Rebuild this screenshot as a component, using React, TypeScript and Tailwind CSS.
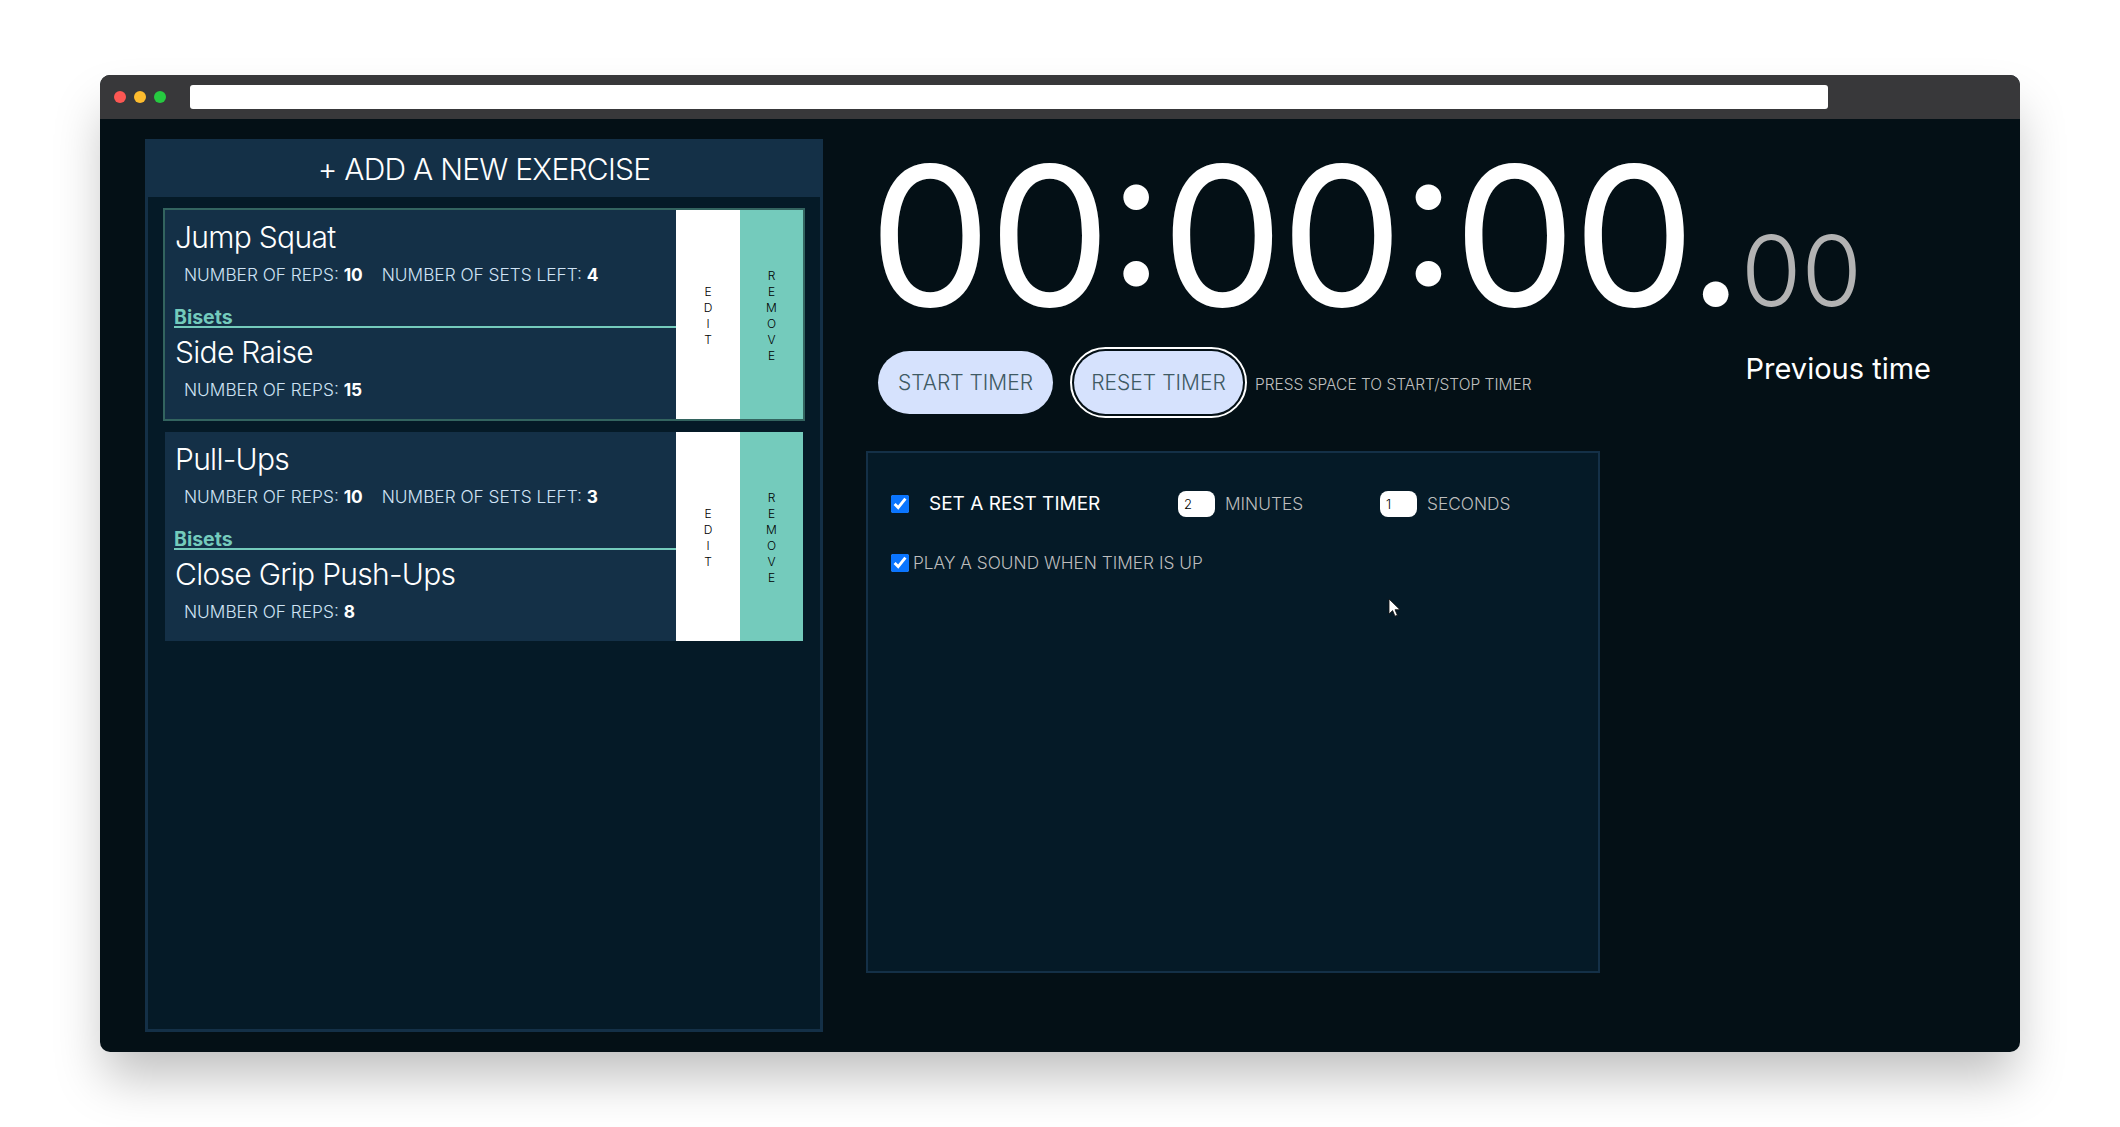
import { FC } from 'react';

type Exercise = { name: string; reps: number; sets?: number };

const groups: Exercise[][] = [
    [{ name: 'Jump Squat', reps: 10, sets: 4 }, { name: 'Side Raise', reps: 15 }],
    [{ name: 'Pull-Ups', reps: 10, sets: 3 }, { name: 'Close Grip Push-Ups', reps: 8 }],
];

const VerticalLabel: FC<{ text: string; className: string }> = ({ text, className }) => (
    <div className={`flex flex-col items-center justify-center text-[12px] leading-[16px] font-light text-black pt-[2px] ${className}`}>
        {text.split('').map((c, i) => <span key={i}>{c}</span>)}
    </div>
);

const Item: FC<{ ex: Exercise }> = ({ ex }) => (
    <div>
        <div className="text-[30px] leading-[36px] font-light tracking-[-0.7px] text-white pl-[1px]">{ex.name}</div>
        <div className="flex gap-[19px] pl-[10px] mt-[8px] text-[17.3px] leading-[24px] font-light text-[#cfe3f5]">
            <span>NUMBER OF REPS: <b className="font-bold text-white">{ex.reps}</b></span>
            {ex.sets !== undefined && <span>NUMBER OF SETS LEFT: <b className="font-bold text-white">{ex.sets}</b></span>}
        </div>
    </div>
);

const Card: FC<{ group: Exercise[]; selected?: boolean }> = ({ group, selected }) => (
    <div className={`flex border-2 ${selected ? 'border-[#33645f]' : 'border-transparent'}`}>
        <div className="flex-1 bg-[#143047] pl-[9px] pt-[9px] pb-[17px]">
            <Item ex={group[0]} />
            <div className="mt-[21px] text-[19.5px] leading-[18px] font-bold text-[#74cbbc] border-b-2 border-[#74cbbc]">Bisets</div>
            <div className="mt-[6px]"><Item ex={group[1]} /></div>
        </div>
        <VerticalLabel text="EDIT" className="w-[64px] bg-white" />
        <VerticalLabel text="REMOVE" className="w-[63px] bg-[#74cbbc]" />
    </div>
);

const Cursor: FC = () => (
    <svg className="absolute left-[520px] top-[145px]" width="13" height="20" viewBox="0 0 13 20">
        <path d="M1 1v15l3.6-3.4 2.4 5.6 2.4-1-2.4-5.5h5z" fill="#fff" stroke="#111" strokeWidth="0.8" />
    </svg>
);

const pill = 'h-[63px] rounded-[32px] bg-[#d6e2fd] text-[21px] font-light text-[#3f5a64] flex items-center justify-center';

const App: FC = () => (
    <div className="w-[2120px] h-[1127px] bg-white pt-[75px] pl-[100px] overflow-hidden font-['Inter',sans-serif]">
        <div className="w-[1920px] h-[977px] rounded-[10px] overflow-hidden bg-[#041016] shadow-[0_30px_50px_-5px_rgba(0,0,0,0.25)] flex flex-col">
            <div className="h-[44px] bg-[#38383a] flex items-center pl-[14px]">
                <div className="flex gap-[8px]">
                    <span className="w-[12px] h-[12px] rounded-full bg-[#fc5753]" />
                    <span className="w-[12px] h-[12px] rounded-full bg-[#fdbc2e]" />
                    <span className="w-[12px] h-[12px] rounded-full bg-[#26c940]" />
                </div>
                <div className="ml-[24px] w-[1638px] h-[24px] rounded-[3px] bg-white" />
            </div>

            <div className="flex-1 flex pl-[45px] pt-[20px]">
                <div className="w-[678px] h-[893px] flex flex-col border-[3px] border-[#143047] bg-[#051a27]">
                    <div className="h-[55px] shrink-0 bg-[#143047] flex items-center justify-center text-[30px] font-light tracking-[-0.75px] text-white">+ ADD A NEW EXERCISE</div>
                    <div className="flex flex-col gap-[9px] pt-[11px] px-[15px]">
                        <Card group={groups[0]} selected />
                        <Card group={groups[1]} />
                    </div>
                </div>

                <div className="flex-1 pl-[43px] min-w-0">
                    <div className="flex items-baseline h-[192px] pt-[3px] pl-[3px] whitespace-nowrap text-white">
                        <span className="text-[194px] leading-[188px] font-normal tracking-[-2.8px] [font-feature-settings:'calt'_1]">00:00:00.</span>
                        <span className="text-[98px] font-light text-[#b3b3b3]">00</span>
                    </div>
                    <div className="flex mt-[20px] pl-[12px]">
                        <button className={`${pill} w-[175px]`}>START TIMER</button>
                        <button className={`${pill} w-[169px] ml-[21px] outline-2 outline-white outline-offset-[2px]`}>RESET TIMER</button>
                        <span className="ml-[12px] mt-[24px] text-[15.5px] leading-[20px] font-light text-[#c0c0c0]">PRESS SPACE TO START/STOP TIMER</span>
                        <span className="ml-[214px] mt-[-2px] text-[29px] leading-[40px] font-normal text-white">Previous time</span>
                    </div>

                    <div className="relative w-[734px] h-[522px] mt-[37px] border-2 border-[#143047] bg-[#051a27] pl-[23px] pt-[32px]">
                        <div className="flex items-center h-[38px] text-[17.3px] font-light text-[#bdbdbd]">
                            <input type="checkbox" checked readOnly className="w-[18px] h-[18px] accent-[#0a75ff]" />
                            <span className="ml-[20px] w-[249px] text-[19px] font-normal text-white">SET A REST TIMER</span>
                            <input value="2" readOnly className="w-[37px] h-[26px] rounded-[8px] bg-white text-black text-[13px] pl-[6px]" />
                            <span className="ml-[10px] w-[155px]">MINUTES</span>
                            <input value="1" readOnly className="w-[37px] h-[26px] rounded-[8px] bg-white text-black text-[13px] pl-[6px]" />
                            <span className="ml-[10px]">SECONDS</span>
                        </div>
                        <div className="flex items-center mt-[27px] text-[17.3px] font-light text-[#bdbdbd]">
                            <input type="checkbox" checked readOnly className="w-[18px] h-[18px] accent-[#0a75ff]" />
                            <span className="ml-[4px]">PLAY A SOUND WHEN TIMER IS UP</span>
                        </div>
                        <Cursor />
                    </div>
                </div>
            </div>
        </div>
    </div>
);

export default App;
